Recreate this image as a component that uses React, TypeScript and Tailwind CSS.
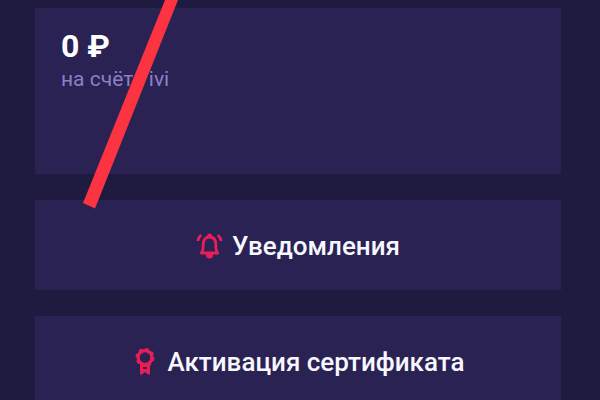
import { FC, ReactNode } from "react";

interface ActionButtonProps {
  icon: ReactNode;
  label: string;
}

const BellIcon: FC = () => {
  return (
    <svg width="28" height="28" viewBox="0 0 28 28" fill="none" stroke="#e91e57" strokeWidth="2.8" aria-hidden="true">
      <path d="M5.2 21h16.6c-1.6-1.4-2-3-2-8.500 0-4.800-2.300-7.500-6.300-7.500s-6.300 2.700-6.300 7.500C7.200 18 6.800 19.600 5.200 21z" strokeLinejoin="round" />
      <path d="M11 4.500a2.500 3 0 0 1 5 0zM9.800 22h7.400a3.700 4.500 0 0 1-7.400 0z" fill="#e91e57" stroke="none" />
      <path d="M5.200 3C3.200 4.600 2.100 6.400 1.700 9M21.800 3c2 1.600 3.100 3.400 3.500 6" />
    </svg>
  );
};

const AwardIcon: FC = () => {
  return (
    <svg width="28" height="28" viewBox="0 0 28 28" fill="none" stroke="#e91e57" aria-hidden="true">
      <circle cx="14" cy="9.500" r="6.900" strokeWidth="3.200" />
      <circle cx="14" cy="9.500" r="8.300" strokeWidth="2.400" strokeDasharray="3.500 3.018" />
      <path d="M9 16h10v10.500h-2L14 24l-3 2.500H9z" fill="#e91e57" stroke="none" />
      <path d="M12.200 19h3.600v2h-3.600z" fill="#2a2252" stroke="none" />
    </svg>
  );
};

const ActionButton: FC<ActionButtonProps> = ({ icon, label }) => {
  return (
    <button type="button" className="flex h-[90px] w-full shrink-0 items-center justify-center gap-2 bg-[#2a2252] pt-1 pb-0.5 text-[26px] font-medium text-[#f8f7ff]">
      {icon}
      <span>{label}</span>
    </button>
  );
};

const App = () => {
  return (
    <main className="relative flex h-screen flex-col gap-[26px] overflow-hidden bg-[#1f1a40] pt-2 pr-[39px] pl-[35px] font-['Roboto',sans-serif]">
      <section className="h-[166px] shrink-0 bg-[#2a2252] px-[26px] pt-5">
        <p className="text-[32px] leading-9 font-bold text-white">0 ₽</p>
        <p className="text-[21px] leading-[30px] text-[#8b80c4]">на счёте ivi</p>
      </section>

      <ActionButton icon={<BellIcon />} label="Уведомления" />
      <ActionButton icon={<AwardIcon />} label="Активация сертификата" />

      {/* red marker stroke over the balance card */}
      <svg className="pointer-events-none absolute top-0 left-20" width="100" height="210" viewBox="0 0 100 210" aria-hidden="true">
        <path d="M85 0h13L15 208.5 3 203z" fill="#fc3340" />
      </svg>
    </main>
  );
};

export default App;
